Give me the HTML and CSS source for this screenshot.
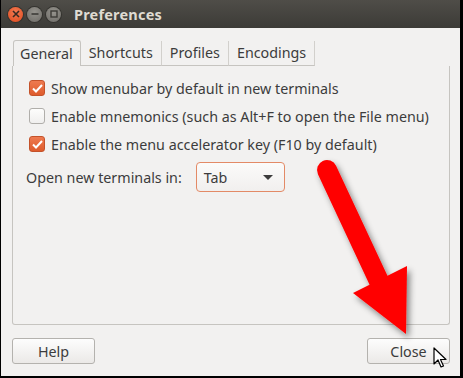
FILE: index.html
```html
<!DOCTYPE html>
<html lang="en">
<head>
  <meta charset="UTF-8">
  <title>Preferences</title>
  <link rel="stylesheet" href="styles.css">
</head>
<body>

  <div class="window">
    <header class="titlebar">
      <span class="wbtn wbtn-close">
        <svg width="8" height="8" viewBox="0 0 8 8"><path d="M1 1L7 7M7 1L1 7" stroke="#3a2a22" stroke-width="1.6"/></svg>
      </span>
      <span class="wbtn">
        <svg width="8" height="8" viewBox="0 0 8 8"><path d="M0.5 4H7.5" stroke="#3c3b37" stroke-width="1.6"/></svg>
      </span>
      <span class="wbtn">
        <svg width="8" height="8" viewBox="0 0 8 8"><rect x="1" y="1" width="6" height="6" fill="none" stroke="#3c3b37" stroke-width="1.4"/></svg>
      </span>
      <h1 class="title">Preferences</h1>
    </header>

    <main class="content">
      <div class="notebook">
        <div class="tabs">
          <span class="tab active">General</span>
          <span class="tab">Shortcuts</span>
          <span class="tab">Profiles</span>
          <span class="tab">Encodings</span>
        </div>
        <div class="page">
          <label class="check-row">
            <span class="check on">
              <svg width="11" height="9" viewBox="0 0 11 9"><path d="M1 4.5L4 7.5L10 1" fill="none" stroke="#fff" stroke-width="2"/></svg>
            </span>
            Show menubar by default in new terminals
          </label>
          <label class="check-row">
            <span class="check"></span>
            Enable mnemonics (such as Alt+F to open the File menu)
          </label>
          <label class="check-row">
            <span class="check on">
              <svg width="11" height="9" viewBox="0 0 11 9"><path d="M1 4.5L4 7.5L10 1" fill="none" stroke="#fff" stroke-width="2"/></svg>
            </span>
            Enable the menu accelerator key (F10 by default)
          </label>
          <div class="combo-row">
            <span>Open new terminals in:</span>
            <span class="combo">Tab <i class="caret"></i></span>
          </div>
        </div>
      </div>

      <footer class="actions">
        <button class="btn">Help</button>
        <button class="btn">Close</button>
      </footer>
    </main>

    <svg class="arrow" width="463" height="378" viewBox="0 0 463 378">
      <defs>
        <filter id="shadow" x="-20%" y="-20%" width="140%" height="140%">
          <feDropShadow dx="3" dy="4" stdDeviation="3" flood-color="#000" flood-opacity="0.45"/>
        </filter>
      </defs>
      <g filter="url(#shadow)" fill="#ff0000">
        <path d="M327 170L384 292" stroke="#ff0000" stroke-width="20" stroke-linecap="round"/>
        <path d="M353 293L407 266L406 334Z"/>
      </g>
    </svg>

    <svg class="cursor" width="14" height="22" viewBox="0 0 14 22">
      <path d="M1 1V17L5 13L8 20L10.5 19L7.5 12.5H13Z" fill="#fff" stroke="#000" stroke-width="1.2" stroke-linejoin="round"/>
    </svg>
  </div>

</body>
</html>
```

FILE: styles.css
```css
    body {
      margin: 0;
      padding: 0;
      background-color: #000;
      font-family: "Noto Sans", "DejaVu Sans", sans-serif;
      color: #3c3c3c;
    }

    .window {
      position: relative;
      width: 459px;
      height: 376px;
      margin-left: 1px;
      background-color: #f2f1f0;
      display: flex;
      flex-direction: column;
      overflow: hidden;
    }

    .titlebar {
      height: 28px;
      flex: none;
      display: flex;
      align-items: center;
      padding-left: 7px;
      gap: 4px;
      background: linear-gradient(#4f4d48, #3c3b37);
    }

    .wbtn {
      width: 15px;
      height: 15px;
      border-radius: 50%;
      display: flex;
      align-items: center;
      justify-content: center;
      background: radial-gradient(circle at 50% 35%, #95938d, #6d6b66);
      box-shadow: 0 0 0 1px #34332f;
    }

    .wbtn-close {
      background: radial-gradient(circle at 50% 35%, #f47a52, #df4a1d);
    }

    .title {
      margin: 0 0 0 9px;
      font-size: 14.5px;
      font-weight: bold;
      color: #dfdbd2;
      letter-spacing: 0.2px;
    }

    .content {
      flex: 1;
      display: flex;
      flex-direction: column;
      padding: 12px 10px 12px 11px;
    }

    .notebook {
      flex: 1;
      display: flex;
      flex-direction: column;
    }

    .tabs {
      display: flex;
      height: 26px;
      padding-left: 1px;
    }

    .tab {
      font-size: 14.3px;
      padding: 0 8px;
      line-height: 24px;
      margin-top: 1px;
      border-right: 1px solid #d2d0cc;
      border-bottom: 1px solid #c6c4c0;
    }

    .tab.active {
      margin-top: 0;
      line-height: 25px;
      padding: 0 7px 0 6px;
      border: 1px solid #c6c4c0;
      border-bottom: none;
      border-radius: 3px 3px 0 0;
      background-color: #f2f1f0;
    }

    .page {
      flex: 1;
      border: 1px solid #c6c4c0;
      border-top: none;
      border-radius: 0 0 3px 3px;
      padding: 8px 0 0 13px;
      position: relative;
    }

    .page::before {
      content: "";
      position: absolute;
      top: -1px;
      left: 0;
      right: -1px;
      border-top: 1px solid #c6c4c0;
      border-right: 1px solid #c6c4c0;
      border-radius: 0 3px 0 0;
      height: 3px;
      z-index: -1;
    }

    .check-row {
      display: flex;
      align-items: center;
      gap: 6px;
      height: 28px;
      font-size: 14.3px;
      margin-left: 3px;
    }

    .check {
      width: 14px;
      height: 14px;
      border: 1px solid #b0aeaa;
      border-radius: 3px;
      background: linear-gradient(#fdfdfc, #f0efee);
      display: flex;
      align-items: center;
      justify-content: center;
      flex: none;
    }

    .check.on {
      border-color: #c4522a;
      background: linear-gradient(#ee7a50, #de5b2c);
    }

    .combo-row {
      display: flex;
      align-items: center;
      gap: 14px;
      margin-top: 4px;
      font-size: 14.3px;
    }

    .combo {
      width: 69px;
      height: 28px;
      border: 1px solid #e38a66;
      border-radius: 4px;
      background: linear-gradient(#fbfbfa, #f1efee);
      display: flex;
      align-items: center;
      justify-content: space-between;
      padding: 0 11px 0 7px;
    }

    .caret {
      width: 0;
      height: 0;
      border-left: 5px solid transparent;
      border-right: 5px solid transparent;
      border-top: 5px solid #3c3c3c;
    }

    .actions {
      display: flex;
      justify-content: space-between;
      margin-top: 13px;
    }

    .btn {
      width: 83px;
      height: 26px;
      font-family: inherit;
      font-size: 14.3px;
      color: #3c3c3c;
      border: 1px solid #b4b2ae;
      border-radius: 3px;
      background: linear-gradient(#fdfdfd, #ebe9e7);
      padding: 0;
    }

    .arrow {
      position: absolute;
      top: 0;
      left: -1px;
      pointer-events: none;
    }

    .cursor {
      position: absolute;
      left: 432px;
      top: 347px;
    }
```
